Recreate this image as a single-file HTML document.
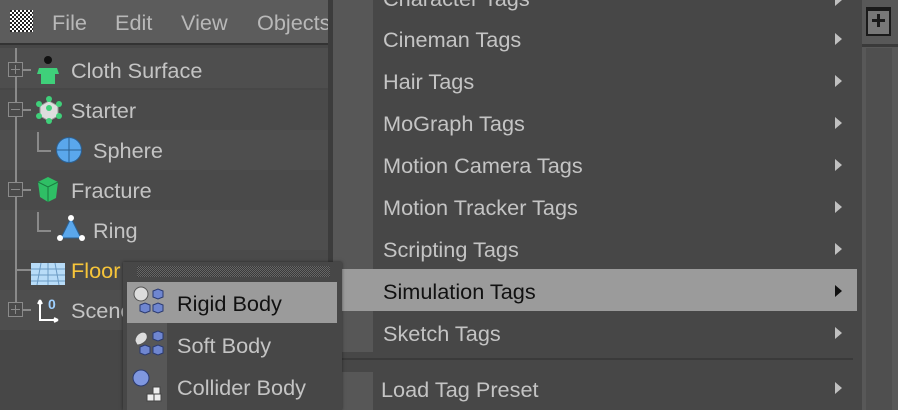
<!DOCTYPE html>
<html><head><meta charset="utf-8"><style>
*{margin:0;padding:0;box-sizing:border-box}
body{width:898px;height:410px;overflow:hidden;background:#474747;font-family:"Liberation Sans",sans-serif;position:relative}
.abs{position:absolute}
.t{position:absolute;font-size:21.7px;color:#c4c4c4;white-space:nowrap}
.row{position:absolute;left:0;width:328px;height:40px}
.arr{position:absolute;width:0;height:0;border-top:6px solid transparent;border-bottom:6px solid transparent;border-left:7px solid #c0c0c0}
.pm{position:absolute;width:15px;height:15px;border:1.5px solid #8a8a8a;background:#4a4a4a}
.pm:before{content:"";position:absolute;left:2px;right:2px;top:5.5px;height:1.5px;background:#8a8a8a}
.pm.p:after{content:"";position:absolute;top:2px;bottom:2px;left:5.5px;width:1.5px;background:#8a8a8a}
</style></head><body>
<div class="abs" style="left:0;top:0;width:332px;height:44px;background:#5c5c5c"></div>
<div class="abs" style="left:0;top:43px;width:330px;height:2px;background:#333"></div>
<div class="abs" style="left:10px;top:10px;width:23px;height:22px;background:repeating-conic-gradient(#fff 0 25%,#222 0 50%) 0 0/4px 4px"></div>
<div class="t" style="left:52px;top:10px;color:#b8b8b8">File</div>
<div class="t" style="left:115px;top:10px;color:#b8b8b8">Edit</div>
<div class="t" style="left:181px;top:10px;color:#b8b8b8">View</div>
<div class="t" style="left:257px;top:10px;color:#b8b8b8">Objects</div>
<div class="row" style="top:48px;background:#4e4e4e"></div>
<div class="row" style="top:90px;background:#4a4a4a"></div>
<div class="row" style="top:130px;background:#4e4e4e"></div>
<div class="row" style="top:170px;background:#4a4a4a"></div>
<div class="row" style="top:210px;background:#4e4e4e"></div>
<div class="row" style="top:250px;background:#4a4a4a"></div>
<div class="row" style="top:290px;background:#4e4e4e"></div>
<div class="abs" style="left:328px;top:0;width:5px;height:410px;background:#3c3c3c"></div>
<div class="abs" style="left:15px;top:48px;width:1.5px;height:262px;background:#8a8a8a"></div>
<div class="pm p" style="left:8px;top:62px"></div><div class="abs" style="left:23px;top:69px;width:8px;height:1.5px;background:#8a8a8a"></div>
<div class="pm" style="left:8px;top:102px"></div><div class="abs" style="left:23px;top:109px;width:8px;height:1.5px;background:#8a8a8a"></div>
<div class="pm" style="left:8px;top:182px"></div><div class="abs" style="left:23px;top:189px;width:8px;height:1.5px;background:#8a8a8a"></div>
<div class="pm p" style="left:8px;top:302px"></div><div class="abs" style="left:23px;top:309px;width:8px;height:1.5px;background:#8a8a8a"></div>
<div class="abs" style="left:16px;top:269px;width:15px;height:1.5px;background:#8a8a8a"></div>
<div class="abs" style="left:37px;top:132px;width:1.5px;height:18px;background:#8a8a8a"></div><div class="abs" style="left:37px;top:150px;width:14px;height:1.5px;background:#8a8a8a"></div>
<div class="abs" style="left:37px;top:212px;width:1.5px;height:18px;background:#8a8a8a"></div><div class="abs" style="left:37px;top:230px;width:14px;height:1.5px;background:#8a8a8a"></div>
<svg class="abs" style="left:34px;top:54px" width="30" height="32"><circle cx="14" cy="6" r="4" fill="#111"/><path d="M5 14h18l2 6h-4v10H7V20H3z" fill="#3fd07a"/></svg>
<svg class="abs" style="left:34px;top:96px" width="30" height="30"><path d="M15 5l9 5v10l-9 5-9-5V10z" fill="#ddd" stroke="#999"/><g fill="#3fd07a"><circle cx="15" cy="3" r="3"/><circle cx="5" cy="8" r="3"/><circle cx="25" cy="8" r="3"/><circle cx="5" cy="20" r="3"/><circle cx="25" cy="20" r="3"/><circle cx="15" cy="25" r="3"/><circle cx="15" cy="12" r="3"/></g></svg>
<svg class="abs" style="left:55px;top:135px" width="30" height="30"><circle cx="14" cy="15" r="12.5" fill="#5aa7ec" stroke="#2b5f90"/><path d="M2 15h25M14 3v24" stroke="#2b5f90" fill="none"/></svg>
<svg class="abs" style="left:34px;top:174px" width="30" height="30"><path d="M4 8l10-5 10 5-2 16-8 4-8-5z" fill="#2fbf65"/><path d="M4 8l10 5 10-5M14 13v15" stroke="#1a7a40" fill="none"/></svg>
<svg class="abs" style="left:55px;top:214px" width="32" height="30"><path d="M16 4L6 24h20z" fill="#5aa7ec" stroke="#2b5f90"/><g fill="#fff"><circle cx="16" cy="4" r="3"/><circle cx="5" cy="24" r="3"/><circle cx="27" cy="24" r="3"/></g></svg>
<svg class="abs" style="left:31px;top:261px" width="34" height="24"><rect x="0" y="2" width="34" height="22" fill="#b8dcf8"/><path d="M0 8h34M0 14h34M0 20h34M10 2L6 24M17 2v22M24 2l4 22" stroke="#6c9bc4"/></svg>
<svg class="abs" style="left:36px;top:294px" width="28" height="30"><path d="M4 6v20h18M4 6l-2 4M4 6l2 4M22 26l-4-2M22 26l-4 2" stroke="#fff" stroke-width="2" fill="none"/><text x="12" y="15" font-size="14" font-weight="bold" fill="#9fd0ff" font-family="Liberation Sans">0</text></svg>
<div class="t" style="left:71px;top:58px">Cloth Surface</div>
<div class="t" style="left:71px;top:98px">Starter</div>
<div class="t" style="left:93px;top:138px">Sphere</div>
<div class="t" style="left:71px;top:178px">Fracture</div>
<div class="t" style="left:93px;top:218px">Ring</div>
<div class="t" style="left:71px;top:258px;color:#f7c53a">Floor</div>
<div class="t" style="left:71px;top:298px">Scene</div>
<div class="abs" style="left:858px;top:0;width:40px;height:410px;background:#585858"></div>
<div class="abs" style="left:862px;top:44px;width:36px;height:3px;background:#3a3a3a"></div>
<div class="abs" style="left:866px;top:48px;width:26px;height:362px;background:#4f4f4f"></div>
<div class="abs" style="left:866px;top:7px;width:25px;height:29px;border:2px solid #1a1a1a;border-top-width:4px;background:#777"></div>
<div class="abs" style="left:872px;top:19px;width:13px;height:3px;background:#1a1a1a"></div>
<div class="abs" style="left:877px;top:14px;width:3px;height:13px;background:#1a1a1a"></div>
<div class="abs" style="left:333px;top:0;width:529px;height:410px;background:#474747"></div>
<div class="abs" style="left:333px;top:0;width:40px;height:410px;background:#575757"></div>
<div class="abs" style="left:333px;top:269px;width:524px;height:42px;background:#9b9b9b"></div>
<div class="abs" style="left:333px;top:352px;width:524px;height:20px;background:#474747"></div>
<div class="abs" style="left:341px;top:358px;width:512px;height:2px;background:#3a3a3a"></div>
<div class="t" style="left:383px;top:-14px">Character Tags</div>
<div class="t" style="left:383px;top:27px">Cineman Tags</div>
<div class="t" style="left:383px;top:69px">Hair Tags</div>
<div class="t" style="left:383px;top:111px">MoGraph Tags</div>
<div class="t" style="left:383px;top:153px">Motion Camera Tags</div>
<div class="t" style="left:383px;top:195px">Motion Tracker Tags</div>
<div class="t" style="left:383px;top:237px">Scripting Tags</div>
<div class="t" style="left:383px;top:279px;color:#111">Simulation Tags</div>
<div class="t" style="left:383px;top:321px">Sketch Tags</div>
<div class="t" style="left:381px;top:377px">Load Tag Preset</div>
<div class="arr" style="left:835px;top:-6px"></div>
<div class="arr" style="left:835px;top:33px"></div>
<div class="arr" style="left:835px;top:75px"></div>
<div class="arr" style="left:835px;top:117px"></div>
<div class="arr" style="left:835px;top:159px"></div>
<div class="arr" style="left:835px;top:201px"></div>
<div class="arr" style="left:835px;top:243px"></div>
<div class="arr" style="left:835px;top:285px;border-left-color:#111"></div>
<div class="arr" style="left:835px;top:327px"></div>
<div class="arr" style="left:835px;top:382px"></div>
<div class="abs" style="left:123px;top:262px;width:219px;height:148px;background:#474747;box-shadow:0 0 3px rgba(0,0,0,.5)"></div>
<div class="abs" style="left:137px;top:266px;width:193px;height:11px;background:repeating-conic-gradient(#666 0 25%,#3a3a3a 0 50%) 0 0/2px 2px"></div>
<div class="abs" style="left:127px;top:282px;width:40px;height:128px;background:#575757"></div>
<div class="abs" style="left:127px;top:282px;width:210px;height:41px;background:#9b9b9b"></div>
<div class="t" style="left:177px;top:291px;color:#111">Rigid Body</div>
<div class="t" style="left:177px;top:333px">Soft Body</div>
<div class="t" style="left:177px;top:375px">Collider Body</div>
<svg class="abs" style="left:131px;top:285px" width="36" height="36"><circle cx="10" cy="9" r="7" fill="#ddd" stroke="#555"/><g fill="#6f86d0" stroke="#2a3a70"><path d="M22 6l5-2 5 2v6l-5 2-5-2z"/><path d="M9 20l5-2 5 2v6l-5 2-5-2z"/><path d="M22 20l5-2 5 2v6l-5 2-5-2z"/></g></svg>
<svg class="abs" style="left:131px;top:327px" width="36" height="36"><path d="M4 14c0-8 10-12 12-6s-6 10-10 10z" fill="#ddd" stroke="#555"/><g fill="#6f86d0" stroke="#2a3a70"><path d="M22 6l5-2 5 2v6l-5 2-5-2z"/><path d="M9 20l5-2 5 2v6l-5 2-5-2z"/><path d="M22 20l5-2 5 2v6l-5 2-5-2z"/></g></svg>
<svg class="abs" style="left:131px;top:369px" width="36" height="40"><circle cx="10" cy="9" r="8" fill="#7f97e0" stroke="#2a3a70"/><g fill="#eee" stroke="#444"><path d="M22 18h7v7h-7z"/><path d="M16 25h7v7h-7z"/><path d="M23 25h7v7h-7z"/></g></svg>
</body></html>
